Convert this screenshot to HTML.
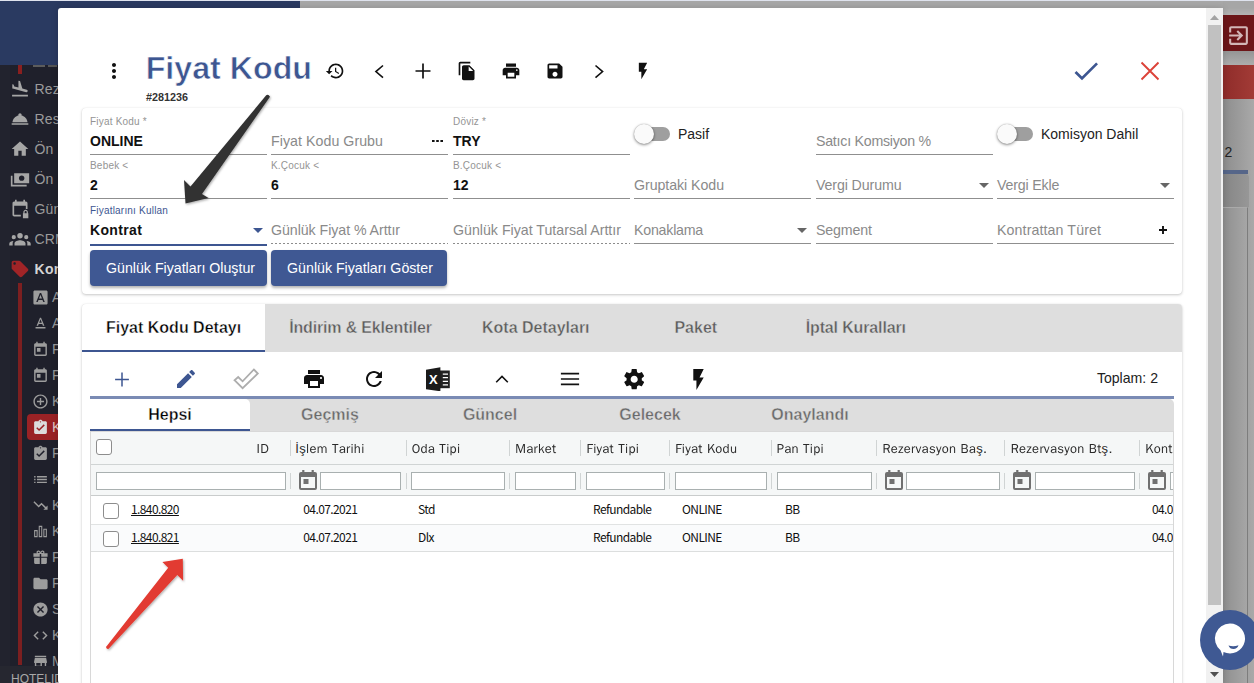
<!DOCTYPE html>
<html lang="tr">
<head>
<meta charset="utf-8">
<title>Fiyat Kodu</title>
<style>
*{box-sizing:border-box;margin:0;padding:0}
html,body{width:1254px;height:683px;overflow:hidden;background:#a8a8a8;font-family:"Liberation Sans",sans-serif;color:#111}
.abs{position:absolute}
svg{display:block}
/* ---------- dimmed background page ---------- */
#bg{position:absolute;left:0;top:0;width:1254px;height:683px;overflow:hidden}
#bg .topline{position:absolute;left:0;top:0;width:1254px;height:1px;background:#dfe3ee}
#bg .navy{position:absolute;left:0;top:1px;width:300px;height:64px;background:#2a3a61}
#bg .side{position:absolute;left:0;top:65px;width:60px;height:618px;background:#1f202b}
#bg .side .it{position:absolute;left:0;height:20px;color:#9c9c9c;font-size:18px;line-height:20px;white-space:nowrap}
#bg .side .it svg{position:absolute;fill:#a3a3a3}
#bg .side .it span{position:absolute;top:0}
/* ---------- modal ---------- */
#modal{position:absolute;left:58px;top:8px;width:1165px;height:676px;background:#fff;border-radius:3px 0 0 4px;overflow:hidden;box-shadow:0 0 7px rgba(0,0,0,.16)}
#sb{position:absolute;left:1206px;top:8px;width:17px;height:675px;background:#f1f1f1}
#sb .thumb{position:absolute;left:2px;top:17px;width:13px;height:580px;background:#c1c1c1}
.card{position:absolute;background:#fff;border-radius:4px;box-shadow:0 1px 3px rgba(0,0,0,.22),0 0 1px rgba(0,0,0,.10)}
.ic{position:absolute}
.ic svg{width:100%;height:100%}
/* fields */
.fld{position:absolute;width:177px;height:44px}
.fld .lb{position:absolute;left:0;top:-0.5px;font-size:10px;letter-spacing:.2px;color:#949494;white-space:nowrap;line-height:12px}
.fld .val{position:absolute;left:0;font-size:14px;font-weight:bold;color:#111;white-space:nowrap;line-height:16px}
.fld .ph{position:absolute;left:0;font-size:14.2px;color:#8a8a8a;white-space:nowrap;line-height:16px}
.fld .ul{position:absolute;left:0;width:177px;height:1px;background:#8f8f8f}
.fld .ul.dot{background:repeating-linear-gradient(90deg,#8c8c8c 0,#8c8c8c 2px,transparent 2px,transparent 4px)}
.tg{position:absolute;width:38px;height:20px}
.tg .tr{position:absolute;left:1px;top:3px;width:35px;height:14px;border-radius:7px;background:#9f9f9f}
.tg .kn{position:absolute;left:0;top:0;width:20px;height:20px;border-radius:50%;background:#fafafa;box-shadow:0 1px 3px rgba(0,0,0,.45),0 0 1px rgba(0,0,0,.3)}
.tgl{position:absolute;font-size:14px;color:#222;white-space:nowrap;line-height:16px}
.btn{position:absolute;height:36px;border-radius:4px;background:#3f5893;color:#fff;font-size:14.2px;line-height:36px;text-align:center;white-space:nowrap;box-shadow:0 2px 3px rgba(0,0,0,.3)}
/* tabs */
.tabs{position:absolute;left:0;top:0;width:1100px;height:48px;background:#dedede;border-radius:4px 4px 0 0;display:flex;overflow:hidden}
.tabs .t{min-width:160px;padding:0 24px;height:48px;line-height:48px;font-size:16px;font-weight:bold;color:#5c5c5c;text-align:center;white-space:nowrap}
.tabs .t{-webkit-text-stroke:.4px #dedede}
.tabs .t.a{-webkit-text-stroke:.4px #fff;background:#fff;color:#000;border-bottom:2px solid #3d5691}
.stabs{position:absolute;height:32px;background:#dedede;border-radius:0 5px 0 0;display:flex;overflow:hidden}
.stabs .t{width:160px;height:32px;line-height:31px;font-size:16px;font-weight:bold;color:#6a6a6a;text-align:center;white-space:nowrap}
.stabs .t{-webkit-text-stroke:.4px #dedede}
.stabs .t.a{-webkit-text-stroke:.4px #fff;background:#fff;color:#000;border-bottom:2px solid #3d5691;border-radius:0 5px 0 0}
/* grid */
.grid{position:absolute;font-family:"WenQuanYi Zen Hei","Liberation Sans",sans-serif;color:#222}
.grid .h{position:absolute;font-size:13px;letter-spacing:.3px;line-height:16px;white-space:nowrap;color:#2a2a2a}
.grid .sep{position:absolute;width:1px;background:#d0d4d4}
.grid .fi{position:absolute;height:18px;border:1px solid #a9b0b0;background:#fff}
.grid .d{position:absolute;font-family:"Noto Sans CJK SC","DejaVu Sans",sans-serif;font-size:12px;letter-spacing:-.6px;line-height:14px;white-space:nowrap;color:#111}
.grid .cb{position:absolute;width:16px;height:16px;border:1px solid #8d8d8d;border-radius:3px;background:#fff}
.grid .cal{position:absolute;width:18px;height:20px}
</style>
</head>
<body>
<div id="bg">
  <div class="topline"></div>
  <div class="navy"></div>
  <div class="side" id="side"><div class="abs" style="left:0;top:0;width:10px;height:618px;background:#22232e"></div><div class="abs" style="left:18px;top:0;width:4px;height:9px;background:#8a1f1f"></div><div class="abs" style="left:18px;top:218px;width:4px;height:382px;background:#7c1f20"></div><div class="abs" style="left:33px;top:0;width:12px;height:2px;background:#5c5c5c"></div><div class="abs" style="left:48px;top:0;width:9px;height:2px;background:#555"></div><svg class="abs" style="left:10.0px;top:14.0px;width:20px;height:20px" viewBox="0 0 24 24"><path fill="#a6a6a6" fill-rule="evenodd" d="M2.500 19h19v2h-19zm7.180-5.730l4.350 1.160 5.310 1.420c.8.21 1.620-.26 1.840-1.060.21-.8-.26-1.620-1.060-1.840l-5.310-1.420-2.760-9.020L10.120 2v8.280L5.150 8.950l-.93-2.320-1.450-.39v5.170l1.600.43 5.310 1.430z"/></svg><div class="abs" style="left:34.5px;top:14px;font-size:14px;line-height:20px;color:#9b9b9b;white-space:nowrap;letter-spacing:.2px">Rez</div><svg class="abs" style="left:10.0px;top:44.0px;width:20px;height:20px" viewBox="0 0 24 24"><path fill="#a6a6a6" fill-rule="evenodd" d="M2 17h20v2H2zm11.840-9.210c.1-.24.16-.51.16-.79 0-1.100-.9-2-2-2s-2 .9-2 2c0 .28.06.55.16.79C6.250 8.600 3.270 11.930 3 16h18c-.27-4.070-3.250-7.400-7.160-8.210z"/></svg><div class="abs" style="left:34.5px;top:44px;font-size:14px;line-height:20px;color:#9b9b9b;white-space:nowrap;letter-spacing:.2px">Res</div><svg class="abs" style="left:10.0px;top:74.0px;width:20px;height:20px" viewBox="0 0 24 24"><path fill="#a6a6a6" fill-rule="evenodd" d="M10 20v-6h4v6h5v-8h3L12 3 2 12h3v8z"/></svg><div class="abs" style="left:34.5px;top:74px;font-size:14px;line-height:20px;color:#9b9b9b;white-space:nowrap;letter-spacing:.2px">Ön</div><svg class="abs" style="left:10.0px;top:104.0px;width:20px;height:20px" viewBox="0 0 24 24"><path fill="#a6a6a6" fill-rule="evenodd" d="M5 5h18v12H5zM14 7.800c-1.900 0-3.300 1.400-3.300 3.200s1.400 3.200 3.300 3.200 3.300-1.400 3.300-3.200-1.400-3.200-3.300-3.200zM3 8H1v13h19v-2H3V8z"/></svg><div class="abs" style="left:34.5px;top:104px;font-size:14px;line-height:20px;color:#9b9b9b;white-space:nowrap;letter-spacing:.2px">Ön</div><svg class="abs" style="left:10.0px;top:134.0px;width:20px;height:20px" viewBox="0 0 24 24"><path fill="#a6a6a6" fill-rule="evenodd" d="M16 1v2H8V1H6v2H5c-1.100 0-2 .9-2 2v14c0 1.100.9 2 2 2h8v-2H5V8h14v4h2V5c0-1.100-.9-2-2-2h-1V1h-2zm6 16h-.5v-1.200c0-1.500-1.200-2.800-2.700-2.800s-2.800 1.300-2.800 2.800V17H15.500v6H22v-6zm-2 0h-2.500v-1.200c0-.7.6-1.300 1.300-1.300s1.200.6 1.200 1.300V17z"/></svg><div class="abs" style="left:34.5px;top:134px;font-size:14px;line-height:20px;color:#9b9b9b;white-space:nowrap;letter-spacing:.2px">Gün</div><svg class="abs" style="left:9px;top:163.0px;width:22px;height:22px" viewBox="0 0 24 24"><path fill="#a6a6a6" fill-rule="evenodd" d="M12 11.500a3 3 0 1 0 0-6 3 3 0 0 0 0 6zM6 19v-2.300c0-2.200 3.800-3.400 6-3.400s6 1.200 6 3.400V19zM5.200 12.300a2.300 2.300 0 1 0 0-4.600 2.300 2.300 0 0 0 0 4.600zM18.800 12.300a2.300 2.300 0 1 0 0-4.600 2.300 2.300 0 0 0 0 4.600zM.3 19v-1.900c0-1.700 2.300-2.700 4.600-2.900-.6.700-.9 1.600-.9 2.500V19zM23.700 19v-1.900c0-1.700-2.300-2.700-4.600-2.900.6.700.9 1.600.9 2.500V19z"/></svg><div class="abs" style="left:34.5px;top:164px;font-size:14px;line-height:20px;color:#9b9b9b;white-space:nowrap;letter-spacing:.2px">CRM</div><svg class="abs" style="left:10px;top:194px;width:20px;height:20px" viewBox="0 0 24 24"><path fill="#a02427" fill-rule="evenodd" d="M21.410 11.580l-9-9C12.050 2.220 11.550 2 11 2H4c-1.100 0-2 .9-2 2v7c0 .55.22 1.050.59 1.420l9 9c.36.36.86.58 1.410.58.55 0 1.050-.22 1.410-.59l7-7c.37-.36.59-.86.59-1.410 0-.55-.23-1.060-.59-1.420zM5.500 7C4.670 7 4 6.330 4 5.500S4.670 4 5.500 4 7 4.670 7 5.500 6.330 7 5.500 7z"/></svg><div class="abs" style="left:34.5px;top:194px;font-size:14px;font-weight:bold;line-height:20px;color:#d4d4d4;white-space:nowrap;letter-spacing:.3px">Kontrat</div><svg class="abs" style="left:31.5px;top:223.5px;width:17px;height:17px" viewBox="0 0 24 24"><path fill="#9d9d9d" fill-rule="evenodd" d="M9.930 13.500h4.140L12 7.980zM20 2H4c-1.100 0-2 .9-2 2v16c0 1.100.9 2 2 2h16c1.100 0 2-.9 2-2V4c0-1.100-.9-2-2-2zm-4.050 16.500l-1.140-3H9.170l-1.120 3H5.960l5.110-13h1.860l5.110 13h-2.090z"/></svg><div class="abs" style="left:52px;top:222px;font-size:14px;line-height:20px;color:#999;white-space:nowrap">A</div><svg class="abs" style="left:31.5px;top:249.5px;width:17px;height:17px" viewBox="0 0 24 24"><path fill="#9d9d9d" fill-rule="evenodd" d="M5 17v2h14v-2H5zm4.500-4.200h5l.9 2.200h2.100L12.750 4h-1.500L6.500 15h2.100l.9-2.200zM12 5.980L13.870 11h-3.740L12 5.980z"/></svg><div class="abs" style="left:52px;top:248px;font-size:14px;line-height:20px;color:#999;white-space:nowrap">A</div><svg class="abs" style="left:31.5px;top:275.5px;width:17px;height:17px" viewBox="0 0 24 24"><path fill="#9d9d9d" fill-rule="evenodd" d="M19 3h-1V1h-2v2H8V1H6v2H5c-1.110 0-1.990.9-1.990 2L3 19c0 1.100.89 2 2 2h14c1.100 0 2-.9 2-2V5c0-1.100-.9-2-2-2zm0 16H5V8h14v11zM7 10h5v5H7z"/></svg><div class="abs" style="left:52px;top:274px;font-size:14px;line-height:20px;color:#999;white-space:nowrap">F</div><svg class="abs" style="left:31.5px;top:301.5px;width:17px;height:17px" viewBox="0 0 24 24"><path fill="#9d9d9d" fill-rule="evenodd" d="M19 3h-1V1h-2v2H8V1H6v2H5c-1.110 0-1.990.9-1.990 2L3 19c0 1.100.89 2 2 2h14c1.100 0 2-.9 2-2V5c0-1.100-.9-2-2-2zm0 16H5V8h14v11zM7 10h5v5H7z"/></svg><div class="abs" style="left:52px;top:300px;font-size:14px;line-height:20px;color:#999;white-space:nowrap">F</div><svg class="abs" style="left:31.5px;top:327.5px;width:17px;height:17px" viewBox="0 0 24 24"><path fill="#9d9d9d" fill-rule="evenodd" d="M13 7h-2v4H7v2h4v4h2v-4h4v-2h-4V7zm-1-5C6.480 2 2 6.480 2 12s4.480 10 10 10 10-4.480 10-10S17.520 2 12 2zm0 18c-4.410 0-8-3.590-8-8s3.590-8 8-8 8 3.590 8 8-3.590 8-8 8z"/></svg><div class="abs" style="left:52px;top:326px;font-size:14px;line-height:20px;color:#999;white-space:nowrap">K</div><div class="abs" style="left:27px;top:349px;width:40px;height:26px;border-radius:4px;background:#9a2225"></div><svg class="abs" style="left:31.5px;top:353.5px;width:17px;height:17px" viewBox="0 0 24 24"><path fill="#dcdcdc" fill-rule="evenodd" d="M19 3h-4.180C14.400 1.840 13.300 1 12 1c-1.300 0-2.400.84-2.820 2H5c-1.100 0-2 .9-2 2v14c0 1.100.9 2 2 2h14c1.100 0 2-.9 2-2V5c0-1.100-.9-2-2-2zm-7 0c.55 0 1 .45 1 1s-.45 1-1 1-1-.45-1-1 .45-1 1-1zm-2 14l-4-4 1.410-1.410L10 14.170l6.590-6.590L18 9l-8 8z"/></svg><div class="abs" style="left:52px;top:352px;font-size:14px;line-height:20px;color:#e0c8c8;white-space:nowrap">K</div><svg class="abs" style="left:31.5px;top:379.5px;width:17px;height:17px" viewBox="0 0 24 24"><path fill="#9d9d9d" fill-rule="evenodd" d="M19 3h-4.180C14.400 1.840 13.300 1 12 1c-1.300 0-2.400.84-2.820 2H5c-1.100 0-2 .9-2 2v14c0 1.100.9 2 2 2h14c1.100 0 2-.9 2-2V5c0-1.100-.9-2-2-2zm-7 0c.55 0 1 .45 1 1s-.45 1-1 1-1-.45-1-1 .45-1 1-1zm-2 14l-4-4 1.410-1.410L10 14.170l6.590-6.590L18 9l-8 8z"/></svg><div class="abs" style="left:52px;top:378px;font-size:14px;line-height:20px;color:#999;white-space:nowrap">F</div><svg class="abs" style="left:31.5px;top:405.5px;width:17px;height:17px" viewBox="0 0 24 24"><path fill="#9d9d9d" fill-rule="evenodd" d="M3 13h2v-2H3v2zm0 4h2v-2H3v2zm0-8h2V7H3v2zm4 4h14v-2H7v2zm0 4h14v-2H7v2zM7 7v2h14V7H7z"/></svg><div class="abs" style="left:52px;top:404px;font-size:14px;line-height:20px;color:#999;white-space:nowrap">K</div><svg class="abs" style="left:31.5px;top:431.5px;width:17px;height:17px" viewBox="0 0 24 24"><path fill="#9d9d9d" fill-rule="evenodd" d="M16 18l2.290-2.290-4.880-4.880-4 4L2 7.410 3.410 6l6 6 4-4 6.300 6.290L22 12v6z"/></svg><div class="abs" style="left:52px;top:430px;font-size:14px;line-height:20px;color:#999;white-space:nowrap">K</div><svg class="abs" style="left:31.5px;top:457.5px;width:17px;height:17px" viewBox="0 0 24 24"><path fill="#9d9d9d" fill-rule="evenodd" d="M3 10h5v10H3zM4.500 11.500v7h2v-7zM9.500 4h5v16h-5zM11 5.500v13h2v-13zM16 8h5v12h-5zM17.500 9.500v9h2v-9z"/></svg><div class="abs" style="left:52px;top:456px;font-size:14px;line-height:20px;color:#999;white-space:nowrap">K</div><svg class="abs" style="left:31.5px;top:483.5px;width:17px;height:17px" viewBox="0 0 24 24"><path fill="#9d9d9d" fill-rule="evenodd" d="M9 2.200c1.300 0 2.300.8 3 2 .7-1.200 1.700-2 3-2 1.500 0 2.600 1.100 2.600 2.500 0 .5-.1.9-.4 1.300H22v5h-9V7h-2v4H2V6h4.800c-.3-.4-.4-.8-.4-1.300C6.400 3.300 7.500 2.200 9 2.200zM9 3.900c-.5 0-.9.4-.9.900s.4.900.9.900h1.800C10.500 4.700 9.800 3.900 9 3.900zM15 3.900c-.8 0-1.500.8-1.800 1.800H15c.5 0 .9-.4.9-.9s-.4-.9-.9-.9zM3 12.500h8V21H4.500c-.8 0-1.500-.7-1.500-1.500zM13 12.500h8v7c0 .8-.7 1.500-1.500 1.500H13z"/></svg><div class="abs" style="left:52px;top:482px;font-size:14px;line-height:20px;color:#999;white-space:nowrap">F</div><svg class="abs" style="left:31.5px;top:509.5px;width:17px;height:17px" viewBox="0 0 24 24"><path fill="#9d9d9d" fill-rule="evenodd" d="M10 4H4c-1.100 0-1.990.9-1.990 2L2 18c0 1.100.9 2 2 2h16c1.100 0 2-.9 2-2V8c0-1.100-.9-2-2-2h-8l-2-2z"/></svg><div class="abs" style="left:52px;top:508px;font-size:14px;line-height:20px;color:#999;white-space:nowrap">F</div><svg class="abs" style="left:31.5px;top:535.5px;width:17px;height:17px" viewBox="0 0 24 24"><path fill="#9d9d9d" fill-rule="evenodd" d="M12 2C6.470 2 2 6.470 2 12s4.470 10 10 10 10-4.470 10-10S17.530 2 12 2zm5 13.590L15.590 17 12 13.410 8.410 17 7 15.590 10.590 12 7 8.410 8.410 7 12 10.590 15.590 7 17 8.410 13.410 12 17 15.590z"/></svg><div class="abs" style="left:52px;top:534px;font-size:14px;line-height:20px;color:#999;white-space:nowrap">S</div><svg class="abs" style="left:31.5px;top:561.5px;width:17px;height:17px" viewBox="0 0 24 24"><path fill="#9d9d9d" fill-rule="evenodd" d="M9.400 16.600L4.800 12l4.600-4.600L8 6l-6 6 6 6 1.400-1.400zm5.200 0l4.600-4.600-4.600-4.600L16 6l6 6-6 6-1.400-1.400z"/></svg><div class="abs" style="left:52px;top:560px;font-size:14px;line-height:20px;color:#999;white-space:nowrap">K</div><svg class="abs" style="left:31.5px;top:587.5px;width:17px;height:17px" viewBox="0 0 24 24"><path fill="#9d9d9d" fill-rule="evenodd" d="M20 4H4v2h16V4zm1 10v-2l-1-5H4l-1 5v2h1v6h10v-6h4v6h2v-6h1zm-9 4H6v-4h6v4z"/></svg><div class="abs" style="left:52px;top:586px;font-size:14px;line-height:20px;color:#999;white-space:nowrap">M</div><div class="abs" style="left:0;top:601px;width:60px;height:17px;background:#262730"></div><div class="abs" style="left:11px;top:607px;font-size:12px;line-height:14px;color:#a9a9a9;white-space:nowrap">HOTELID</div></div>
  <div id="rightbg" class="abs" style="left:1223px;top:0;width:31px;height:683px;background:linear-gradient(90deg,#8d8d8d,#a9a9a9)"><div class="abs" style="left:0;top:0;width:31px;height:1px;background:#dfe3ee"></div><div class="abs" style="left:0;top:1px;width:31px;height:14px;background:linear-gradient(#a6a6a6 50%,#b4b4b4)"></div><div class="abs" style="left:0;top:15px;width:31px;height:36px;background:#6c1619"></div><div class="abs" style="left:0;top:51px;width:31px;height:14px;background:linear-gradient(#959595,#adadad)"></div><div class="abs" style="left:0;top:65px;width:31px;height:34px;background:linear-gradient(90deg,#8f2c2a,#a23b36)"></div><svg class="abs" style="left:2.500px;top:22.500px;width:25px;height:25px" viewBox="0 0 24 24"><path fill="#d2b6b6" d="M10.090 15.590L11.500 17l5-5-5-5-1.410 1.410L12.670 11H3v2h9.670l-2.580 2.590zM19 3H5c-1.110 0-2 .9-2 2v4h2V5h14v14H5v-4H3v4c0 1.100.89 2 2 2h14c1.100 0 2-.9 2-2V5c0-1.100-.9-2-2-2z"/></svg><div class="abs" style="left:1.500px;top:144px;font-size:14px;line-height:16px;color:#222">2</div><div class="abs" style="left:0;top:170px;width:25px;height:4px;background:#566689"></div><div class="abs" style="left:0;top:174px;width:26px;height:33px;background:linear-gradient(90deg,#858585,#979797);border-radius:0 4px 0 0"></div><div class="abs" style="left:0;top:207px;width:25px;height:476px;border-top:1px solid #aaa;border-right:1px solid #7d7d7d;background:linear-gradient(90deg,#8f8f8f,#a6a6a6)"></div></div>
</div>
<div id="modal">
<div id="pc" style="position:absolute;left:-58px;top:-8px;width:1254px;height:683px">
<!-- header -->
<div class="ic" style="left:102px;top:59px;width:24px;height:24px"><svg viewBox="0 0 24 24"><path fill="#111" d="M12 8c1.1 0 2-.9 2-2s-.9-2-2-2-2 .9-2 2 .9 2 2 2zm0 2c-1.100 0-2 .9-2 2s.9 2 2 2 2-.9 2-2-.9-2-2-2zm0 6c-1.100 0-2 .9-2 2s.9 2 2 2 2-.9 2-2-.9-2-2-2z"/></svg></div>
<div class="abs" id="title" style="left:145.7px;top:49px;font-size:32.2px;font-weight:bold;color:#3d5691;line-height:38px;white-space:nowrap;-webkit-text-stroke:.6px #fff">Fiyat Kodu</div>
<div class="abs" id="rid" style="left:146px;top:91px;font-size:10.8px;font-weight:bold;color:#333;line-height:12px;white-space:nowrap">#281236</div>
<div class="ic" style="left:325px;top:61px;width:20px;height:20px"><svg viewBox="0 0 24 24"><path fill="#111" d="M13 3c-4.970 0-9 4.030-9 9H1l3.890 3.890.07.140L9 12H6c0-3.870 3.130-7 7-7s7 3.130 7 7-3.130 7-7 7c-1.930 0-3.680-.79-4.940-2.060l-1.420 1.420C8.270 19.990 10.510 21 13 21c4.970 0 9-4.030 9-9s-4.030-9-9-9zm-1 5v5l4.280 2.540.72-1.210-3.500-2.080V8H12z"/></svg></div>
<div class="ic" style="left:367px;top:59px;width:24px;height:24px"><svg viewBox="0 0 24 24"><path fill="none" stroke="#111" stroke-width="1.6" d="M16 6.500L8.900 12.600L16 18.700"/></svg></div>
<div class="ic" style="left:411px;top:59px;width:24px;height:24px"><svg viewBox="0 0 24 24"><path fill="none" stroke="#111" stroke-width="1.700" d="M12 4.500V19.500M4.500 12H19.500"/></svg></div>
<div class="ic" style="left:457px;top:61px;width:20px;height:20px"><svg viewBox="0 0 24 24"><path fill="#111" d="M16 1H4c-1.100 0-2 .9-2 2v14h2V3h12V1zm-1 4l6 6v10c0 1.100-.9 2-2 2H7.990C6.890 23 6 22.100 6 21l.01-14c0-1.100.89-2 1.990-2h7zm-1 7h5.500L14 6.500V12z"/></svg></div>
<div class="ic" style="left:501px;top:61px;width:20px;height:20px"><svg viewBox="0 0 24 24"><path fill="#111" d="M19 8H5c-1.660 0-3 1.340-3 3v6h4v4h12v-4h4v-6c0-1.660-1.340-3-3-3zm-3 11H8v-5h8v5zm3-7c-.55 0-1-.45-1-1s.45-1 1-1 1 .45 1 1-.45 1-1 1zm-1-9H6v4h12V3z"/></svg></div>
<div class="ic" style="left:545px;top:61px;width:20px;height:20px"><svg viewBox="0 0 24 24"><path fill="#111" d="M17 3H5c-1.110 0-2 .9-2 2v14c0 1.100.89 2 2 2h14c1.100 0 2-.9 2-2V7l-4-4zm-5 16c-1.660 0-3-1.340-3-3s1.340-3 3-3 3 1.340 3 3-1.340 3-3 3zm3-10H5V5h10v4z"/></svg></div>
<div class="ic" style="left:587px;top:59px;width:24px;height:24px"><svg viewBox="0 0 24 24"><path fill="none" stroke="#111" stroke-width="1.6" d="M8.500 6.500L15.600 12.600L8.500 18.700"/></svg></div>
<div class="ic" style="left:633px;top:61px;width:20px;height:20px"><svg viewBox="0 0 24 24"><path fill="#111" d="M7 2v11h3v9l7-12h-4l4-8z"/></svg></div>
<div class="ic" style="left:1070px;top:55px;width:32px;height:32px"><svg viewBox="0 0 24 24"><path fill="#3d5691" d="M9 16.170L4.830 12l-1.420 1.410L9 19 21 7l-1.410-1.410z"/></svg></div>
<div class="ic" style="left:1138px;top:59px;width:24px;height:24px"><svg viewBox="0 0 24 24"><path fill="none" stroke="#dc4238" stroke-width="1.900" d="M3.500 3.500L20.500 20.500M20.500 3.500L3.500 20.500"/></svg></div>
<div class="card" style="left:82px;top:108px;width:1100px;height:186px"></div>
<div class="fld" style="left:90px;top:116px"><div class="lb">Fiyat Kodu *</div><div class="val" style="top:17px">ONLINE</div><div class="ul" style="top:38px"></div></div>
<div class="fld" style="left:271px;top:116px"><div class="ph" style="top:17px;letter-spacing:0.05px">Fiyat Kodu Grubu</div><div class="ul" style="top:38px"></div><svg style="position:absolute;left:160.700px;top:24px;width:11px;height:2px" viewBox="0 0 11 2"><path fill="#111" d="M0 0h2.600v2H0zM4.200 0h2.600v2H4.200zM8.400 0h2.600v2H8.400z"/></svg></div>
<div class="fld" style="left:453px;top:116px"><div class="lb">Döviz *</div><div class="val" style="top:17px">TRY</div><div class="ul" style="top:38px"></div></div>
<div class="fld" style="left:816px;top:116px"><div class="ph" style="top:17px;letter-spacing:-0.24px">Satıcı Komsiyon %</div><div class="ul" style="top:38px"></div></div>
<div class="fld" style="left:90px;top:160px"><div class="lb">Bebek &lt;</div><div class="val" style="top:17px">2</div><div class="ul" style="top:38px"></div></div>
<div class="fld" style="left:271px;top:160px"><div class="lb">K.Çocuk &lt;</div><div class="val" style="top:17px">6</div><div class="ul" style="top:38px"></div></div>
<div class="fld" style="left:453px;top:160px"><div class="lb">B.Çocuk &lt;</div><div class="val" style="top:17px">12</div><div class="ul" style="top:38px"></div></div>
<div class="fld" style="left:634px;top:160px"><div class="ph" style="top:17px;letter-spacing:-0.05px">Gruptaki Kodu</div><div class="ul" style="top:38px"></div></div>
<div class="fld" style="left:816px;top:160px"><div class="ph" style="top:17px;letter-spacing:-0.11px">Vergi Durumu</div><div class="ul" style="top:38px"></div><svg style="position:absolute;left:163px;top:23px;width:10px;height:5px" viewBox="0 0 10 5"><path fill="#666" d="M0 0h10L5 5z"/></svg></div>
<div class="fld" style="left:997px;top:160px"><div class="ph" style="top:17px;letter-spacing:-0.17px">Vergi Ekle</div><div class="ul" style="top:38px"></div><svg style="position:absolute;left:163px;top:23px;width:10px;height:5px" viewBox="0 0 10 5"><path fill="#666" d="M0 0h10L5 5z"/></svg></div>
<div class="fld" style="left:90px;top:205px"><div class="lb" style="color:#3d5691">Fiyatlarını Kullan</div><div class="val" style="top:17px;letter-spacing:.35px">Kontrat</div><div class="ul" style="top:39px;height:2px;background:#3d5691"></div><svg style="position:absolute;left:163px;top:23px;width:10px;height:5px" viewBox="0 0 10 5"><path fill="#3d5691" d="M0 0h10L5 5z"/></svg></div>
<div class="fld" style="left:271px;top:205px"><div class="ph" style="top:17px;letter-spacing:-0.05px">Günlük Fiyat % Arttır</div><div class="ul dot" style="top:38px"></div></div>
<div class="fld" style="left:453px;top:205px"><div class="ph" style="top:17px">Günlük Fiyat Tutarsal Arttır</div><div class="ul dot" style="top:38px"></div></div>
<div class="fld" style="left:634px;top:205px"><div class="ph" style="top:17px;letter-spacing:-0.22px">Konaklama</div><div class="ul" style="top:38px"></div><svg style="position:absolute;left:163px;top:23px;width:10px;height:5px" viewBox="0 0 10 5"><path fill="#666" d="M0 0h10L5 5z"/></svg></div>
<div class="fld" style="left:816px;top:205px"><div class="ph" style="top:17px;letter-spacing:-0.16px">Segment</div><div class="ul" style="top:38px"></div></div>
<div class="fld" style="left:997px;top:205px"><div class="ph" style="top:17px;letter-spacing:0.11px">Kontrattan Türet</div><div class="ul" style="top:38px"></div><svg style="position:absolute;left:162px;top:21px;width:8px;height:8px" viewBox="0 0 8 8"><path stroke="#111" stroke-width="1.900" d="M4 0V8M0 4H8"/></svg></div>
<div class="tg" style="left:634.3px;top:124px"><div class="tr"></div><div class="kn"></div></div><div class="tgl" style="left:678px;top:126px">Pasif</div>
<div class="tg" style="left:997.3px;top:124px"><div class="tr"></div><div class="kn"></div></div><div class="tgl" style="left:1041px;top:126px">Komisyon Dahil</div>
<div class="btn" style="left:90px;top:250px;width:177px;padding-left:4px">Günlük Fiyatları Oluştur</div>
<div class="btn" style="left:271px;top:250px;width:176px;padding-left:2px">Günlük Fiyatları Göster</div>
<!--CARD1END-->
<div class="card" style="left:82px;top:304px;width:1100px;height:400px"><div class="tabs"><div class="t a">Fiyat Kodu Detayı</div><div class="t" style="letter-spacing:-.16px">İndirim &amp; Eklentiler</div><div class="t">Kota Detayları</div><div class="t">Paket</div><div class="t" style="letter-spacing:-.14px">İptal Kuralları</div></div></div>
<div class="ic" style="left:110.0px;top:367.5px;width:24px;height:24px"><svg viewBox="0 0 24 24"><path fill="none" stroke="#3d5691" stroke-width="1.500" d="M12 4.600V18.400M5.100 11.500H18.900"/></svg></div>
<div class="ic" style="left:173.5px;top:367.0px;width:24px;height:24px"><svg viewBox="0 0 24 24"><path fill="#3d5691" d="M3 17.250V21h3.750L17.810 9.940l-3.750-3.750L3 17.250zM20.710 7.040c.39-.39.39-1.020 0-1.410l-2.340-2.340c-.39-.39-1.020-.39-1.410 0l-1.830 1.830 3.750 3.750 1.830-1.830z"/></svg></div>
<svg class="abs" style="left:230px;top:365px;width:32px;height:28px" viewBox="230 365 32 28"><path fill="#fff" stroke="#adadad" stroke-width="1.800" stroke-linejoin="miter" d="M234.500 380.200L242.600 388.200L257.800 373.500L253.900 369.500L242.600 381.300L238.200 377.000Z"/></svg>
<div class="ic" style="left:302.1px;top:366.9px;width:24px;height:24px"><svg viewBox="0 0 24 24"><path fill="#111" d="M19 8H5c-1.660 0-3 1.340-3 3v6h4v4h12v-4h4v-6c0-1.660-1.340-3-3-3zm-3 11H8v-5h8v5zm3-7c-.55 0-1-.45-1-1s.45-1 1-1 1 .45 1 1-.45 1-1 1zm-1-9H6v4h12V3z"/></svg></div>
<div class="ic" style="left:362.0px;top:367.3px;width:24px;height:24px"><svg viewBox="0 0 24 24"><path fill="#111" d="M17.650 6.350C16.200 4.900 14.210 4 12 4c-4.420 0-7.990 3.580-7.990 8s3.570 8 7.990 8c3.730 0 6.840-2.550 7.730-6h-2.080c-.82 2.330-3.040 4-5.650 4-3.310 0-6-2.690-6-6s2.690-6 6-6c1.660 0 3.140.69 4.220 1.780L13 11h7V4l-2.350 2.350z"/></svg></div>
<div class="ic" style="left:426px;top:366.500px;width:24px;height:24.500px"><svg viewBox="0 0 24 24.500"><rect x="14" y="3.500" width="9.800" height="17.700" fill="#222"/><path fill="#fff" d="M16.800 6.500h5.200v1.200h-5.200zM16.800 10.100h5.200v1.200h-5.200zM16.800 13.700h5.200v1.200h-5.200zM16.800 17.300h5.200v1.200h-5.200z"/><path fill="#1b1b1b" d="M0 2.800L14.400 .3v24L0 22.200z"/><text x="7.300" y="17.100" font-family="Liberation Sans,sans-serif" font-weight="bold" font-size="13" fill="#fff" text-anchor="middle">X</text></svg></div>
<div class="ic" style="left:490.0px;top:367.2px;width:24px;height:24px"><svg viewBox="0 0 24 24"><path fill="none" stroke="#111" stroke-width="1.600" d="M6.200 15.300L12 9.500L17.800 15.300"/></svg></div>
<div class="ic" style="left:558.0px;top:367.0px;width:24px;height:24px"><svg viewBox="0 0 24 24"><path fill="none" stroke="#111" stroke-width="1.700" d="M2.900 6.700h18.200M2.900 12h18.200M2.900 17.300h18.200"/></svg></div>
<div class="ic" style="left:621.8px;top:366.6px;width:24.4px;height:24.4px"><svg viewBox="0 0 24 24"><path fill="#111" d="M19.430 12.980c.04-.32.07-.64.07-.98s-.03-.66-.07-.98l2.110-1.650c.19-.15.24-.42.12-.64l-2-3.460c-.12-.22-.39-.3-.61-.22l-2.490 1c-.52-.4-1.080-.73-1.690-.98l-.38-2.650C14.460 2.180 14.250 2 14 2h-4c-.25 0-.46.18-.49.42l-.38 2.650c-.61.25-1.170.59-1.690.98l-2.490-1c-.23-.09-.49 0-.61.22l-2 3.460c-.13.22-.07.49.12.64l2.110 1.650c-.04.32-.07.65-.07.98s.03.66.07.98l-2.110 1.650c-.19.15-.24.42-.12.640l2 3.460c.12.22.39.3.61.22l2.490-1c.52.4 1.080.73 1.690.98l.38 2.650c.03.24.24.42.49.42h4c.25 0 .46-.18.49-.42l.38-2.650c.61-.25 1.170-.59 1.690-.98l2.490 1c.23.09.49 0 .61-.22l2-3.460c.12-.22.07-.49-.12-.64l-2.110-1.650zM12 15.500c-1.930 0-3.500-1.570-3.500-3.500s1.570-3.500 3.500-3.500 3.500 1.570 3.500 3.500-1.570 3.500-3.500 3.500z"/></svg></div>
<div class="ic" style="left:685.5px;top:366.7px;width:25px;height:25px"><svg viewBox="0 0 24 24"><path fill="#111" d="M7 2v11h3v9l7-12h-4l4-8z"/></svg></div>
<div class="abs" style="left:1000px;top:370px;width:158px;text-align:right;font-size:14.1px;line-height:16px;color:#222;white-space:nowrap">Toplam: 2</div>
<div class="abs" style="left:90px;top:396px;width:1084px;height:3px;background:#7a8bb4"></div>
<div class="stabs" style="left:90px;top:399px;width:1084px"><div class="t a">Hepsi</div><div class="t">Geçmiş</div><div class="t">Güncel</div><div class="t">Gelecek</div><div class="t">Onaylandı</div></div>
<div class="grid" style="left:90px;top:431px;width:1084px;height:260px;overflow:hidden;border-left:1px solid #d8d8d8;border-right:1px solid #d8d8d8;border-top:1px solid #d8d8d8"><div class="abs" style="left:0;top:0;width:1084px;height:64px;background:#f5f7f7"></div><div class="abs" style="left:0;top:32px;width:1084px;height:1px;background:#d0d4d4"></div><div class="abs" style="left:0;top:63px;width:1084px;height:1px;background:#c9cccc"></div><div class="abs" style="left:0;top:92px;width:1084px;height:1px;background:#e1e3e3"></div><div class="abs" style="left:0;top:93px;width:1084px;height:27px;background:#fafbfc"></div><div class="abs" style="left:0;top:118.500px;width:1084px;height:1px;background:#dcdede"></div><div class="sep" style="left:199px;top:8px;height:16px"></div><div class="sep" style="left:199px;top:41px;height:16px"></div><div class="sep" style="left:315px;top:8px;height:16px"></div><div class="sep" style="left:315px;top:41px;height:16px"></div><div class="sep" style="left:418px;top:8px;height:16px"></div><div class="sep" style="left:418px;top:41px;height:16px"></div><div class="sep" style="left:489px;top:8px;height:16px"></div><div class="sep" style="left:489px;top:41px;height:16px"></div><div class="sep" style="left:578px;top:8px;height:16px"></div><div class="sep" style="left:578px;top:41px;height:16px"></div><div class="sep" style="left:680px;top:8px;height:16px"></div><div class="sep" style="left:680px;top:41px;height:16px"></div><div class="sep" style="left:785px;top:8px;height:16px"></div><div class="sep" style="left:785px;top:41px;height:16px"></div><div class="sep" style="left:913px;top:8px;height:16px"></div><div class="sep" style="left:913px;top:41px;height:16px"></div><div class="sep" style="left:1048px;top:8px;height:16px"></div><div class="sep" style="left:1048px;top:41px;height:16px"></div><div class="h" style="left:165.5px;top:9px">ID</div><div class="h" style="left:204.3px;top:9px">İşlem Tarihi</div><div class="h" style="left:320.7px;top:9px">Oda Tipi</div><div class="h" style="left:424.2px;top:9px">Market</div><div class="h" style="left:495.6px;top:9px">Fiyat Tipi</div><div class="h" style="left:584.3px;top:9px">Fiyat Kodu</div><div class="h" style="left:685.7px;top:9px">Pan Tipi</div><div class="h" style="left:791.4px;top:9px">Rezervasyon Baş.</div><div class="h" style="left:919.7px;top:9px">Rezervasyon Btş.</div><div class="h" style="left:1054.3px;top:9px">Kontrat Baş.</div><div class="cb" style="left:5px;top:7px"></div><div class="fi" style="left:5px;top:40px;width:190px"></div><div class="fi" style="left:229px;top:40px;width:81px"></div><div class="fi" style="left:320px;top:40px;width:94px"></div><div class="fi" style="left:424px;top:40px;width:61px"></div><div class="fi" style="left:495px;top:40px;width:79px"></div><div class="fi" style="left:584px;top:40px;width:92px"></div><div class="fi" style="left:686px;top:40px;width:95px"></div><div class="fi" style="left:815px;top:40px;width:94px"></div><div class="fi" style="left:943.5px;top:40px;width:100px"></div><div class="fi" style="left:1078.5px;top:40px;width:30.5px"></div><svg class="cal" style="left:208px;top:38px" viewBox="0 0 18 20"><path fill="#707070" fill-rule="evenodd" d="M3.200 0h2.200v2h7.200V0h2.200v2H16a2 2 0 0 1 2 2v14a2 2 0 0 1-2 2H2a2 2 0 0 1-2-2V4a2 2 0 0 1 2-2h1.200zM2 7v11h14V7zM4.500 9h5v5h-5z"/></svg><svg class="cal" style="left:793.5px;top:38px" viewBox="0 0 18 20"><path fill="#707070" fill-rule="evenodd" d="M3.200 0h2.200v2h7.200V0h2.200v2H16a2 2 0 0 1 2 2v14a2 2 0 0 1-2 2H2a2 2 0 0 1-2-2V4a2 2 0 0 1 2-2h1.200zM2 7v11h14V7zM4.500 9h5v5h-5z"/></svg><svg class="cal" style="left:922px;top:38px" viewBox="0 0 18 20"><path fill="#707070" fill-rule="evenodd" d="M3.200 0h2.200v2h7.200V0h2.200v2H16a2 2 0 0 1 2 2v14a2 2 0 0 1-2 2H2a2 2 0 0 1-2-2V4a2 2 0 0 1 2-2h1.200zM2 7v11h14V7zM4.500 9h5v5h-5z"/></svg><svg class="cal" style="left:1057px;top:38px" viewBox="0 0 18 20"><path fill="#707070" fill-rule="evenodd" d="M3.200 0h2.200v2h7.200V0h2.200v2H16a2 2 0 0 1 2 2v14a2 2 0 0 1-2 2H2a2 2 0 0 1-2-2V4a2 2 0 0 1 2-2h1.200zM2 7v11h14V7zM4.500 9h5v5h-5z"/></svg><div class="cb" style="left:12px;top:70.5px"></div><div class="d" style="left:40px;top:69.5px;text-decoration:underline">1.840.820</div><div class="d" style="left:212.3px;top:69.5px">04.07.2021</div><div class="d" style="left:327px;top:69.5px">Std</div><div class="d" style="left:502px;top:69.5px">Refundable</div><div class="d" style="left:591px;top:69.5px">ONLINE</div><div class="d" style="left:694px;top:69.5px">BB</div><div class="d" style="left:1061px;top:69.5px">04.07.2021</div><div class="cb" style="left:12px;top:99px"></div><div class="d" style="left:40px;top:98px;text-decoration:underline">1.840.821</div><div class="d" style="left:212.3px;top:98px">04.07.2021</div><div class="d" style="left:327px;top:98px">Dlx</div><div class="d" style="left:502px;top:98px">Refundable</div><div class="d" style="left:591px;top:98px">ONLINE</div><div class="d" style="left:694px;top:98px">BB</div><div class="d" style="left:1061px;top:98px">04.07.2021</div></div>
<svg class="abs" style="left:0;top:0;width:1254px;height:683px;pointer-events:none" viewBox="0 0 1254 683">
<defs><filter id="sh" x="-20%" y="-20%" width="140%" height="140%"><feDropShadow dx="1" dy="1.200" stdDeviation="0.800" flood-color="#000" flood-opacity="0.320"/></filter></defs>
<path filter="url(#sh)" fill="#333" d="M266.200 95.200Q268.300 93.600 270 96.800L202 194L208.500 198L185.500 203.500L184 180L190.500 186.500Z"/>
<path filter="url(#sh)" fill="#e23b30" d="M106 647L168.200 567.800L162.400 562L182.800 558.700L183.100 580.700L177.300 574.900L108.400 649Q106.500 649.500 106 647Z"/>
</svg>


</div>
</div>
<div id="sb"><div class="thumb"></div>
<svg class="abs" style="left:4px;top:7px;width:9px;height:5px" viewBox="0 0 9 5"><path fill="#a3a3a3" d="M0 5L4.500 0L9 5z"/></svg>
<svg class="abs" style="left:4px;top:664px;width:9px;height:5px" viewBox="0 0 9 5"><path fill="#505050" d="M0 0h9L4.500 5z"/></svg>
</div>
<div class="abs" style="left:1200px;top:610px;width:60px;height:60px;border-radius:50%;background:#3f5993"></div>
<svg class="abs" style="left:1200px;top:610px;width:60px;height:60px" viewBox="0 0 60 60"><path fill="#fff" d="M30 13.500a15 15 0 1 1 -6.500 28.500L23 46.500L20.500 40.200A15 15 0 0 1 30 13.500z"/><path fill="#3f5993" d="M28.500 35.500q5 1.800 10-.3q-1.300 3.800-5 3.800t-5-3.500z"/></svg>
</body>
</html>
